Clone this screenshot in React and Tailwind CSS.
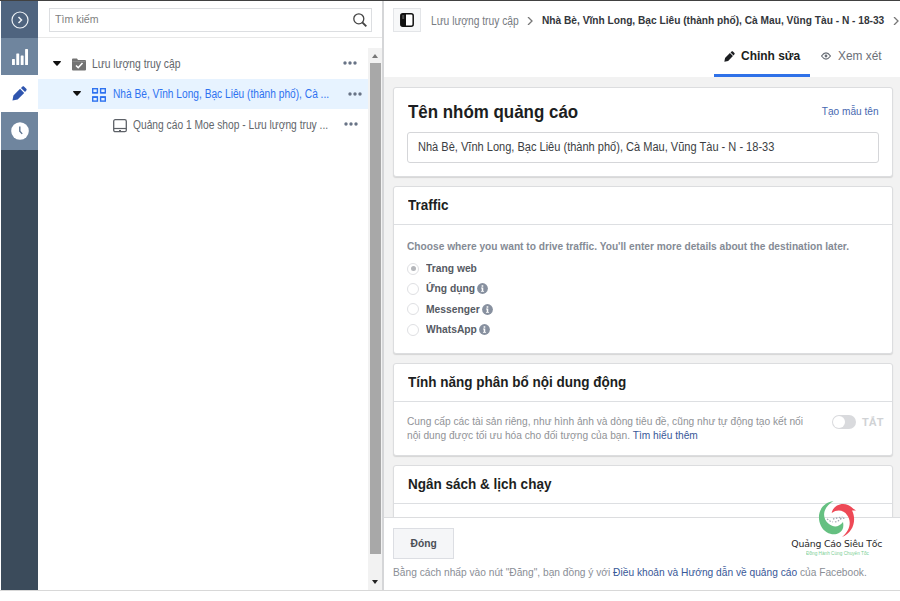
import React from "react";

const Pencil = ({ className }) => (
  <svg viewBox="0 0 16 16" className={className} fill="currentColor">
    <path d="M.5 15.500l1-5.500L8.600 3 13 7.400l-7 7.100zM9.500 2.100l1.500-1.400c.6-.6 1.400-.6 2 0l2.200 2.200c.6.600.6 1.400 0 2L13.900 6.500z" />
  </svg>
);

const Info = () => (
  <svg viewBox="0 0 10 10" className="size-[11px] shrink-0">
    <circle cx="5" cy="5" r="4.9" fill="#87909f" />
    <path d="M4.200 2h1.500v1.300H4.200zM3.700 4.200h2v3h.7v.8H3.600v-.8h.7V5h-.6z" fill="#fff" />
  </svg>
);

const Caret = () => (
  <svg viewBox="0 0 8 5" className="-mt-px h-[5px] w-2 shrink-0">
    <path d="M0 .700Q0 0 .7 0h6.600q.7 0 .7.700L4.600 4.500q-.6.500-1.200 0z" fill="#111" />
  </svg>
);

const Dots = ({ className }) => (
  <svg viewBox="0 0 14 4" className={"-mt-px h-1 w-[14px] shrink-0 " + className}>
    <g fill="#687386">
      <circle cx="2" cy="2" r="1.700" />
      <circle cx="7" cy="2" r="1.700" />
      <circle cx="12" cy="2" r="1.700" />
    </g>
  </svg>
);

function Rail() {
  return (
    <nav className="flex w-[37px] shrink-0 flex-col bg-[#3b4b5b]">
      <div className="flex h-[37px] items-center justify-center bg-[#4f647f]">
        <svg viewBox="0 0 18 18" className="size-[18px]" fill="none" stroke="#eef2f6">
          <circle cx="9" cy="9" r="8" strokeWidth="1.200" />
          <path d="M7.500 6l3 3-3 3" strokeWidth="1.500" />
        </svg>
      </div>
      <div className="flex h-[37px] items-center justify-center bg-[#6f859e]">
        <svg viewBox="0 0 16 16" className="size-4" fill="#fff">
          <rect x="0" y="10" width="2.900" height="6" rx=".6" />
          <rect x="4.300" y="4.500" width="2.900" height="11.500" rx=".6" />
          <rect x="8.700" y="6.500" width="2.900" height="9.500" rx=".6" />
          <rect x="13.100" y="0" width="2.900" height="16" rx=".6" />
        </svg>
      </div>
      <div className="flex h-[37px] items-center justify-center bg-white text-[#2f55ae]">
        <Pencil className="size-[15px]" />
      </div>
      <div className="flex h-[38px] items-center justify-center bg-[#6f859e]">
        <svg viewBox="0 0 18 18" className="size-[18px]">
          <circle cx="9" cy="9" r="8.800" fill="#fff" />
          <path d="M8.800 4.500v4.800l2.400 2.600" fill="none" stroke="#5c7390" strokeWidth="1.400" />
        </svg>
      </div>
    </nav>
  );
}

function Tree() {
  return (
    <section className="flex w-[344px] shrink-0 flex-col">
      <div className="flex h-[37px] shrink-0 border-b border-[#e8e8e8] pl-[11px] pt-[7px]">
        <div className="flex h-6 w-[323px] items-center justify-between border border-[#dcdee1] pl-[5px] pr-1">
          <span className="origin-left scale-x-[.92] text-[11.5px] text-[#7f7f7f]">Tìm kiếm</span>
          <svg viewBox="0 0 14 14" className="size-[14px]" fill="none" stroke="#444">
            <circle cx="5.800" cy="5.800" r="5" strokeWidth="1.300" />
            <path d="M9.300 9.300l4 4" strokeWidth="1.900" />
          </svg>
        </div>
      </div>
      <div className="flex min-h-0 flex-1">
        <div className="flex w-[330px] flex-col pt-[10px] text-[12px] text-[#62666b]">
          <div className="flex h-[31px] items-center pl-[15px]">
            <Caret />
            <svg viewBox="0 0 14 13" className="ml-[11px] mt-[2px] h-[13px] w-[14px] shrink-0">
              <path d="M0 1.500Q0 .5 1 .5h4l1 1.500h7q1 0 1 1V11.500q0 1-1 1H1q-1 0-1-1z" fill="#737373" />
              <path d="M.5 3.500h13" stroke="#999" strokeWidth=".6" />
              <path d="M4 7.500l2.200 2.200L10.500 5" fill="none" stroke="#fff" strokeWidth="1.600" />
            </svg>
            <span className="ml-[6px] w-[230px] shrink-0 origin-left scale-x-[.862] whitespace-nowrap">Lưu lượng truy cập</span>
            <Dots className="ml-[21px]" />
          </div>
          <div className="flex h-[30px] items-center bg-[#e7f3ff] pl-[35px] text-[#2e72f0]">
            <Caret />
            <svg viewBox="0 0 14 14" className="ml-[11px] mt-[2px] size-[14px] shrink-0" fill="none" stroke="#2e72f0" strokeWidth="1.400">
              <rect x=".7" y=".7" width="4.700" height="4.200" />
              <rect x="8.600" y=".7" width="4.700" height="4.200" />
              <rect x=".7" y="8.900" width="4.700" height="4.200" />
              <rect x="8.600" y="8.900" width="4.700" height="4.200" />
              <path d="M.7 4.600h4.700M8.600 4.600h4.700M.7 9.200h4.700M8.600 9.200h4.700" />
            </svg>
            <span className="ml-[7px] w-[218px] shrink-0 origin-left scale-x-[.848] whitespace-nowrap">Nhà Bè, Vĩnh Long, Bạc Liêu (thành phố), Cà ...</span>
            <Dots className="ml-[17px]" />
          </div>
          <div className="flex h-[31px] items-center pl-[75px]">
            <svg viewBox="0 0 14 14" className="mt-[2px] size-[14px] shrink-0" fill="none" stroke="#5d6167">
              <rect x=".7" y=".7" width="12.600" height="12" rx="1.500" strokeWidth="1.300" />
              <path d="M1 9.500h12" strokeWidth="1.200" />
              <path d="M6 11.500h2" />
            </svg>
            <span className="ml-[6px] w-[198px] shrink-0 origin-left scale-x-[.853] whitespace-nowrap">Quảng cáo 1 Moe shop - Lưu lượng truy ...</span>
            <Dots className="ml-[13px]" />
          </div>
        </div>
        <div className="mt-[10px] flex w-[14px] flex-col items-center bg-[#f2f2f2]">
          <div className="flex h-[15px] items-center">
            <svg viewBox="0 0 6 4" className="h-1 w-[6px]"><path d="M0 4l3-4 3 4z" fill="#777" /></svg>
          </div>
          <div className="h-[491px] w-[11px] bg-[#a8a8a8]" />
          <div className="flex flex-1 items-end pb-[6px]">
            <svg viewBox="0 0 6 4" className="h-1 w-[6px]"><path d="M0 0h6L3 4z" fill="#222" /></svg>
          </div>
        </div>
      </div>
    </section>
  );
}

function Header() {
  return (
    <header className="flex h-[76px] shrink-0 flex-col bg-white">
      <div className="flex h-[37px] items-center whitespace-nowrap pl-[9px] pt-[1px]">
        <div className="flex h-6 w-[28px] shrink-0 items-center justify-center border border-[#e3e5e8] bg-[#f7f8f9]">
          <svg viewBox="0 0 14 14" className="size-[14px]">
            <rect x=".8" y=".8" width="12.400" height="12.400" rx="2" fill="#fff" stroke="#111" strokeWidth="1.500" />
            <path d="M1 1h5v12H1z" fill="#111" />
            <path d="M2.200 3h2M2.200 5h2" stroke="#bbb" strokeWidth=".7" />
          </svg>
        </div>
        <span className="ml-[10px] mt-px w-[87px] shrink-0 origin-left scale-x-[.855] text-[12px] text-[#777b82]">Lưu lượng truy cập</span>
        <svg viewBox="0 0 6 8" className="ml-[9px] mt-[2px] h-2 w-[6px] shrink-0"><path d="M1 0l4 4-4 4" fill="none" stroke="#777" strokeWidth="1.300" /></svg>
        <span className="ml-[9px] mt-px w-[343px] shrink-0 origin-left scale-x-[.884] text-[11.5px] font-bold text-[#33363b]">Nhà Bè, Vĩnh Long, Bạc Liêu (thành phố), Cà Mau, Vũng Tàu - N - 18-33</span>
        <svg viewBox="0 0 6 8" className="ml-[8px] mt-[2px] h-2 w-[6px] shrink-0"><path d="M1 0l4 4-4 4" fill="none" stroke="#777" strokeWidth="1.300" /></svg>
      </div>
      <div className="flex h-[39px] justify-end pr-[18px]">
        <div className="flex h-[39px] w-24 items-center border-b-[3px] border-[#2f71e8] pl-[10px] text-[#1c1e21]">
          <Pencil className="size-[11px] shrink-0" />
          <span className="ml-[6px] origin-left scale-x-[.92] whitespace-nowrap text-[13px] font-bold">Chỉnh sửa</span>
        </div>
        <div className="ml-[11px] flex h-9 items-center text-[#6b7078]">
          <svg viewBox="0 0 10 8" className="h-2 w-[10px]">
            <path d="M.5 4Q5-2.200 9.500 4 5 10.200.5 4z" fill="none" stroke="currentColor" strokeWidth="1.200" />
            <circle cx="5" cy="4" r="1.400" fill="currentColor" />
          </svg>
          <span className="ml-[7px] w-11 origin-left scale-x-[.95] whitespace-nowrap text-[12.5px]">Xem xét</span>
        </div>
      </div>
    </header>
  );
}

const Card = ({ className, children }) => (
  <div className={"flex w-[500px] shrink-0 flex-col rounded-[3px] border border-[#dcdddf] bg-white shadow-[0_1px_1px_#d5d5d5] " + className}>
    {children}
  </div>
);

const CardTitle = ({ children }) => (
  <h2 className="flex h-[38px] shrink-0 items-center whitespace-nowrap border-b border-[#dddfe2] pl-[14px] text-[14px] font-bold text-[#1c1e21]">
    <span className="origin-left scale-x-[.965]">{children}</span>
  </h2>
);

const destinations = [
  { label: "Trang web", width: "w-[54px]", on: true },
  { label: "Ứng dụng", width: "w-[51px]", info: true },
  { label: "Messenger", width: "w-[56px]", info: true },
  { label: "WhatsApp", width: "w-[53px]", info: true },
];

function Editor() {
  return (
    <div className="flex min-h-0 flex-1 flex-col gap-[9px] overflow-hidden bg-[#f2f2f2] pl-[9px] pt-[10px]">
      <Card className="h-[90px]">
        <div className="flex h-[44px] items-center justify-between pl-[14px] pr-[13px] pt-[4px]">
          <h1 className="origin-left scale-x-[.94] whitespace-nowrap text-[18px] font-bold text-[#1c1e21]">Tên nhóm quảng cáo</h1>
          <span className="origin-right scale-x-[.88] whitespace-nowrap text-[11.5px] text-[#4768b0]">Tạo mẫu tên</span>
        </div>
        <div className="ml-[13px] flex h-[31px] w-[472px] items-center rounded-[3px] border border-[#d5d6d9] pb-[2px] pl-[10px] text-[12px] text-[#3b3e43]">
          <span className="origin-left scale-x-[.92] whitespace-nowrap">Nhà Bè, Vĩnh Long, Bạc Liêu (thành phố), Cà Mau, Vũng Tàu - N - 18-33</span>
        </div>
      </Card>
      <Card className="h-[168px]">
        <CardTitle>Traffic</CardTitle>
        <div className="pl-[13px] pt-[14px]">
          <p className="h-[19.5px] origin-left scale-x-[.885] whitespace-nowrap text-[11.5px] font-bold leading-[14px] text-[#858b95]">Choose where you want to drive traffic. You'll enter more details about the destination later.</p>
          {destinations.map((d) => (
            <div key={d.label} className="flex h-[20.3px] items-center text-[11.5px] font-bold text-[#555a63]">
              <span className="mr-[7px] flex size-3 items-center justify-center rounded-full border border-[#dfe0e3] bg-white">
                {d.on && <i className="size-[5px] rounded-full bg-[#b5b7bb]" />}
              </span>
              <span className={"shrink-0 origin-left scale-x-[.895] whitespace-nowrap " + d.width}>{d.label}</span>
              {d.info && <Info />}
            </div>
          ))}
        </div>
      </Card>
      <Card className="h-[93px]">
        <CardTitle>Tính năng phân bổ nội dung động</CardTitle>
        <div className="flex pl-[13px] pt-[13px]">
          <p className="w-[425px] shrink-0 origin-left scale-x-[.886] whitespace-nowrap text-[11.5px] leading-[13.5px] text-[#919397]">
            Cung cấp các tài sản riêng, như hình ảnh và dòng tiêu đề, cũng như tự động tạo kết nối
            <br />
            nội dung được tối ưu hóa cho đối tượng của bạn. <span className="text-[#385898]">Tìm hiểu thêm</span>
          </p>
          <span className="flex h-[14px] w-6 items-center rounded-full bg-[#d9dadd] pl-px">
            <i className="size-3 rounded-full bg-white" />
          </span>
          <span className="ml-[6px] text-[11px] leading-[14px] font-bold text-[#d0d2d5]">TẮT</span>
        </div>
      </Card>
      <Card className="h-[80px]">
        <CardTitle>Ngân sách &amp; lịch chạy</CardTitle>
      </Card>
    </div>
  );
}

function BrandMark() {
  return (
    <div className="absolute right-[17px] top-[-17px] flex w-[92px] flex-col items-center">
      <svg viewBox="0 0 38 38" className="h-[38px] w-[38px]">
        <path d="M15.500 0C2 2-2 15 3 25c4 8 13 10 18 7 4-2 5-6 4-11-4 5-9 6-14 2C3 17 5 6 15.500 0z" fill="#65c081" />
        <path d="M13.700 12C15 5 23 1 30 4c3 1 5 4 8 5.500h-4C39 19 35 32 24 36c8-6 10-16 5-22-3-5-10-6-15.300-2z" fill="#ee4956" />
        <path d="M9 18l3 2 3 1M15 18l4-1 5-1M17 21l3-1 5-4M22 18l5-1" fill="none" stroke="#a3a9b4" strokeWidth="1.300" strokeDasharray="1.500 1.500" />
      </svg>
      <span className="-mt-[1px] scale-x-[1.04] whitespace-nowrap font-['DejaVu_Sans'] text-[9px] leading-[12px] tracking-[-0.2px] text-[#292929]">Quảng Cáo Siêu Tốc</span>
      <span className="scale-x-[.94] whitespace-nowrap text-[5px] leading-[6px] text-[#7bcf95]">Đồng Hành Cùng Chuyên Tốc</span>
    </div>
  );
}

function Footer() {
  return (
    <footer className="relative flex h-[73px] shrink-0 flex-col border-t border-[#dcdddf] bg-white pl-[9px] pt-[10px]">
      <button className="flex h-[31px] w-[61px] shrink-0 items-center justify-center border border-[#dcdee3] bg-[#f5f6f8] text-[11.5px] font-bold text-[#4b4f56]">
        <span className="scale-x-[.89]">Đóng</span>
      </button>
      <p className="mt-[5px] w-[500px] origin-left scale-x-[.886] whitespace-nowrap text-[11.5px] leading-[16px] text-[#8a8e96]">
        Bằng cách nhấp vào nút "Đăng", bạn đồng ý với <span className="text-[#385898]">Điều khoản và Hướng dẫn về quảng cáo</span> của Facebook.
      </p>
      <BrandMark />
    </footer>
  );
}

export default function App() {
  return (
    <div className="h-[601px] w-[900px] overflow-hidden bg-white font-['Liberation_Sans',Arial,sans-serif]">
      <div className="flex h-[591px] flex-col border-b border-[#d8d8d8]">
        <div className="h-px shrink-0 bg-[#414141]" />
        <div className="flex min-h-0 flex-1 pl-px">
          <Rail />
          <Tree />
          <main className="flex min-w-0 flex-1 flex-col border-l-2 border-[#d5d6d8]">
            <Header />
            <Editor />
            <Footer />
          </main>
        </div>
      </div>
    </div>
  );
}
